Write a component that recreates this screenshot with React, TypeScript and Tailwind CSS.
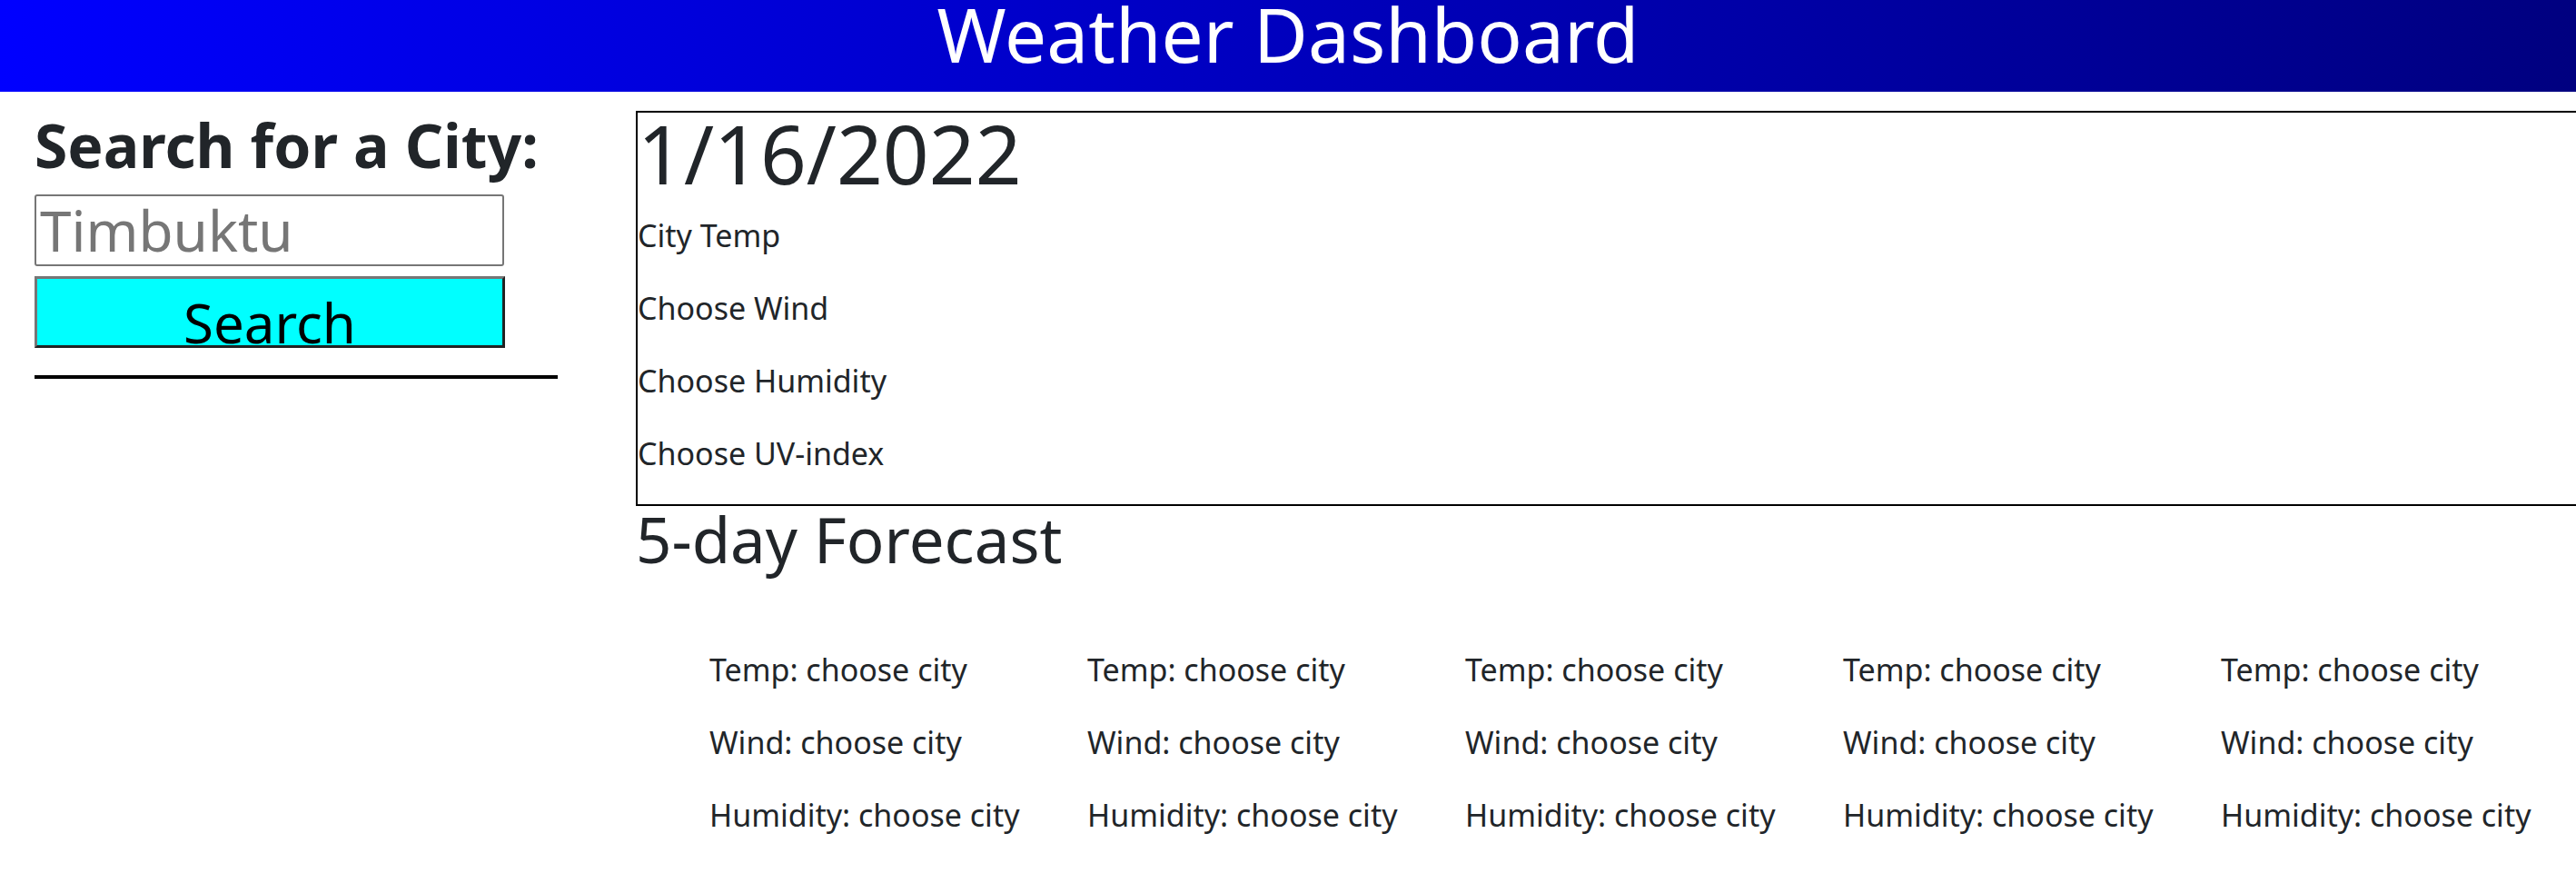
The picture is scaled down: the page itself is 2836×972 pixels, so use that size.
import React from "react";

const forecast = [0, 1, 2, 3, 4];

export default function App() {
  return (
    <div className="w-[2836px] h-[972px] overflow-hidden bg-white text-[#212529] font-['Noto_Sans',sans-serif]">
      <header className="h-[101px] bg-gradient-to-r from-[#0000ff] to-[#000080] text-center text-white text-[82px] leading-[74px]">
        Weather Dashboard
      </header>
      <div className="flex">
        <aside className="w-[700px] shrink-0 pl-[38px] pt-[18px]">
          <h2 className="text-[66px] font-bold leading-[80px] whitespace-nowrap">Search for a City:</h2>
          <input
            type="text"
            placeholder="Timbuktu"
            className="mt-[15px] block w-[517px] h-[79px] border-2 border-[#767676] rounded-[3px] pl-[4px] p-0 text-[62px] text-black placeholder:text-[#767676] outline-none"
          />
          <button
            type="button"
            className="mt-[11px] flex justify-center items-start w-[518px] h-[79px] border-[3px] border-solid border-t-[#767676] border-l-[#767676] border-r-[#222222] border-b-[#222222] bg-[#00ffff] pt-[18px] text-[60px] leading-[60px] text-black"
          >
            Search
          </button>
          <div className="mt-[30px] w-[576px] h-[4px] bg-black" />
        </aside>
        <main className="shrink-0 pt-[21px]">
          <section className="w-[2200px] border-2 border-black">
            <h1 className="text-[89px] leading-[89px]">1/16/2022</h1>
            <div className="mt-[22px] text-[34px] leading-[48px]">
              <p className="mb-[32px]">City Temp</p>
              <p className="mb-[32px]">Choose Wind</p>
              <p className="mb-[32px]">Choose Humidity</p>
              <p className="mb-[32px]">Choose UV-index</p>
            </div>
          </section>
          <h3 className="text-[69px] leading-[73px]">5-day Forecast</h3>
          <div className="mt-[83px] pl-[81px] grid grid-cols-[repeat(5,416px)] text-[34px] leading-[48px] whitespace-nowrap">
            {forecast.map((i) => (
              <div key={i}>
                <p className="mb-[32px]">Temp: choose city</p>
                <p className="mb-[32px]">Wind: choose city</p>
                <p className="mb-[32px]">Humidity: choose city</p>
              </div>
            ))}
          </div>
        </main>
      </div>
    </div>
  );
}
